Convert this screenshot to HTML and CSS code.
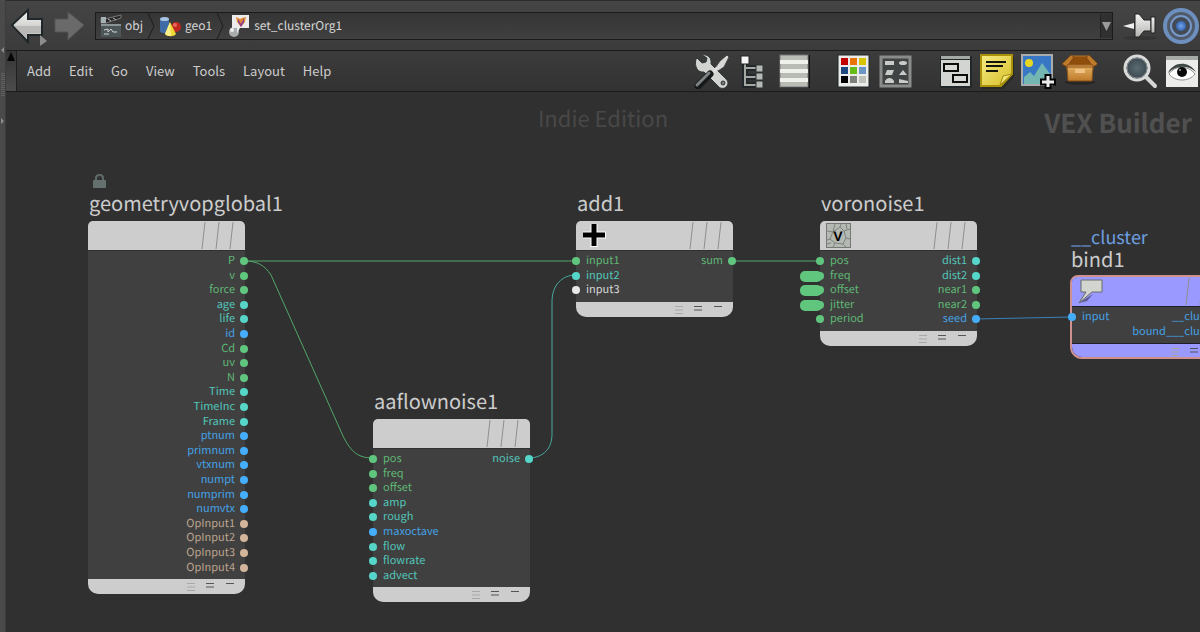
FILE: index.html
```html
<!DOCTYPE html>
<html lang="en">

<head>
    <meta charset="UTF-8">
    <meta name="viewport" content="width=device-width, initial-scale=1.0">
    <title>VEX Builder</title>

    <link rel="stylesheet" href="styles.css">
</head>

<body>
<svg class="defs" aria-hidden="true">
    <defs>
        <linearGradient id="silver" x1="0" y1="0" x2="0" y2="1">
            <stop offset="0" stop-color="#f4f4f2"/>
            <stop offset="1" stop-color="#b4b6b2"/>
        </linearGradient>
        <linearGradient id="gold" x1="0" y1="0" x2="1" y2="1">
            <stop offset="0" stop-color="#f6ec84"/>
            <stop offset="1" stop-color="#d6bf28"/>
        </linearGradient>
        <linearGradient id="wood" x1="0" y1="0" x2="0" y2="1">
            <stop offset="0" stop-color="#e2ac5e"/>
            <stop offset="1" stop-color="#bd7a2c"/>
        </linearGradient>
        <radialGradient id="lens">
            <stop offset="0" stop-color="#5b6c74"/>
            <stop offset="1" stop-color="#38444a"/>
        </radialGradient>
        <radialGradient id="core">
            <stop offset="0" stop-color="#74a4ec"/>
            <stop offset="1" stop-color="#3467b2"/>
        </radialGradient>
        <symbol id="slashes" viewBox="0 0 48 30">
            <path d="M8 1L5 28M22 1L19 28M36 1L33 28" stroke="#8f8f8f" fill="none"/>
        </symbol>
        <symbol id="flags" viewBox="0 0 60 15">
            <path d="M2 4.500h8M2 8h8M2 11.500h8" stroke="#a8a8a8" fill="none"/>
            <path d="M21 4.500h8M21 8h8M41 4.500h8" stroke="#555" fill="none"/>
        </symbol>
    </defs>
</svg>

<div class="app">
    <aside class="splitter">
        <svg width="6" height="130" viewBox="0 0 6 130">
            <path d="M4 47v6L1 50zM1 118v6l3-3z" fill="#8d8d8d"/>
            <path d="M2 73v24M4 73v24" stroke="#777" stroke-dasharray="1 1"/>
        </svg>
    </aside>

    <main class="pane">
        <header class="path-bar">
            <button class="nav-button" aria-label="Back">
                <svg width="42" height="42" viewBox="0 0 42 42">
                    <path d="M6 21L22 6v9h14v16h-14v7z" transform="translate(-1 -1)" fill="url(#silver)" stroke="#20272a" stroke-width="2"/>
                    <path d="M7 21h27v7h-14v6z" fill="#b9bab7"/>
                    <path d="M33 30v11l7-5z" fill="#8c8c8c"/>
                </svg>
            </button>
            <button class="nav-button" aria-label="Forward">
                <svg width="42" height="42" viewBox="0 0 42 42">
                    <path d="M35 20L19 7v7H6v13h13v8z" fill="#6a6a6a" stroke="#545454"/>
                </svg>
            </button>
            <nav class="path-field">
                <a href="#" class="crumb">
                    <svg width="22" height="24" viewBox="0 0 22 24">
                        <path d="M1 4l4 1 16-4v3L6 9H1z" fill="#262626" stroke="#777"/>
                        <path d="M8 5l3 2M13 4l3 2" stroke="#bbb"/>
                        <path d="M1 3h5v6H1z" fill="#a5b0b3"/>
                        <rect x="1" y="10" width="20" height="13" fill="#4c5659"/>
                        <path d="M1 10h20v2H1z" fill="#8b9495"/>
                        <path d="M4 16l4-1v3l3-3 2 3h4M4 20h5" stroke="#d0d0d0" fill="none"/>
                    </svg>
                    obj
                </a>
                <svg class="chevron" width="8" height="26" viewBox="0 0 8 26"><path d="M1 0L7 13 1 26" stroke="#1c1c1c" fill="none"/></svg>
                <a href="#" class="crumb">
                    <svg width="23" height="24" viewBox="0 0 23 24">
                        <path d="M1 5v12c0 3 9 3 9 0V5z" fill="#3f6ba6"/>
                        <ellipse cx="5.500" cy="5" rx="4.500" ry="2" fill="#a8c4e4"/>
                        <circle cx="17" cy="13" r="5" fill="#c0281f"/>
                        <circle cx="16" cy="11" r="2" fill="#e56a5c"/>
                        <path d="M11 8l6 12c-2 3-9 3-11 0z" fill="#f0d936"/>
                        <path d="M11 8l1 14c-3 0-5-1-6-2z" fill="#f8ef8c"/>
                    </svg>
                    geo1
                </a>
                <svg class="chevron" width="8" height="26" viewBox="0 0 8 26"><path d="M1 0L7 13 1 26" stroke="#1c1c1c" fill="none"/></svg>
                <a href="#" class="crumb">
                    <svg width="23" height="24" viewBox="0 0 23 24">
                        <circle cx="6" cy="18" r="5" fill="#a9adad"/>
                        <circle cx="4" cy="16" r="2" fill="#eee"/>
                        <path d="M4 1h17v13h-9l-3 5v-5H4z" fill="#ececec"/>
                        <path d="M8 3l4 2 2-1 4-1-1 5-4 5-4-5z" fill="#e38a35"/>
                        <path d="M10 5l3 5 3-6v4l-3 5-3-5z" fill="#8a3c96"/>
                    </svg>
                    set_clusterOrg1
                </a>
                <button class="path-menu" aria-label="Path history">
                    <svg width="11" height="24" viewBox="0 0 11 24"><path d="M1 8h9l-4.500 9z" fill="#9b9b9b"/></svg>
                </button>
            </nav>
            <button class="nav-button pin" aria-label="Pin">
                <svg width="36" height="36" viewBox="0 0 36 36">
                    <ellipse cx="18" cy="30" rx="17" ry="2" fill="#353535"/>
                    <path d="M1 18l11-3v6z" fill="#f0f0f0"/>
                    <path d="M13 6h4l5 6h7v11h-7l-5 6h-4z" fill="url(#silver)" stroke="#222"/>
                    <rect x="29" y="9" width="4" height="16" fill="url(#silver)" stroke="#222"/>
                </svg>
            </button>
            <button class="nav-button" aria-label="Follow selection">
                <svg width="38" height="38" viewBox="0 0 38 38">
                    <circle cx="19" cy="19" r="16" fill="#515a68" stroke="#6c8fbe" stroke-width="4"/>
                    <circle cx="19" cy="19" r="10" fill="#454b55" stroke="#7599ca" stroke-width="2"/>
                    <circle cx="19" cy="19" r="5" fill="url(#core)"/>
                </svg>
            </button>
        </header>

        <div class="menu-bar">
            <button class="collapse" aria-label="Collapse bar">
                <svg width="10" height="40" viewBox="0 0 10 40"><path d="M1 10L5 1l4 9z" fill="#050505"/></svg>
            </button>
            <nav class="menus">
                <button class="menu">Add</button>
                <button class="menu">Edit</button>
                <button class="menu">Go</button>
                <button class="menu">View</button>
                <button class="menu">Tools</button>
                <button class="menu">Layout</button>
                <button class="menu">Help</button>
            </nav>
            <div class="tools">
                <div class="tool-group">
                    <button class="tool" aria-label="Tools">
                        <svg viewBox="0 0 36 36">
                            <path d="M3 4l5 5 4-1 1-4-5-3c6-1 10 3 9 9l15 15c3 3 2 6 0 8s-6 2-8-1L10 18C4 19 0 13 2 5z" transform="translate(1 1)" fill="#d2d4d1" stroke="#30383a"/>
                            <circle cx="30" cy="30" r="2" fill="#777" stroke="#333"/>
                            <path d="M34 2l2 2-5 10-6 4-3-3 5-7z" fill="#d8d9d6" stroke="#444"/>
                            <path d="M23 14l2 3-7 7-3-3z" fill="#ddd"/>
                            <path d="M5 33L17 21" stroke="#15191a" stroke-width="7" stroke-linecap="round"/>
                            <path d="M4 32L16 20" stroke="#7e8182" stroke-width="3" stroke-linecap="round"/>
                        </svg>
                    </button>
                    <button class="tool" aria-label="Tree view">
                        <svg viewBox="0 0 36 36">
                            <path d="M11 11v21h12M11 15h12M11 24h12" stroke="#22282a" stroke-width="6" fill="none"/>
                            <path d="M11 10v22h12M11 15h12M11 24h12" stroke="#a4aaa3" stroke-width="2" fill="none"/>
                            <rect x="7" y="3" width="8" height="8" fill="#f5f5f5" stroke="#222"/>
                            <path d="M22 12h7v7h-7zM22 20h7v7h-7zM22 28h7v7h-7z" fill="#b4bab3" stroke="#2a3234"/>
                        </svg>
                    </button>
                    <button class="tool" aria-label="List view">
                        <svg viewBox="0 0 36 36">
                            <rect x="5" y="2" width="30" height="33" fill="#111"/>
                            <rect x="5" y="2" width="28" height="32" fill="#b9bcb5" stroke="#777"/>
                            <path d="M5 9h28M5 18h28M5 27h28" stroke="#efefec" stroke-width="4"/>
                        </svg>
                    </button>
                </div>
                <div class="tool-group">
                    <button class="tool" aria-label="Color palette">
                        <svg viewBox="0 0 36 36">
                            <rect x="2" y="2" width="31" height="32" fill="#ececea" stroke="#20282a"/>
                            <path fill="#c00000" d="M5 5h7v7H5z"/><path fill="#e87408" d="M14 5h7v7h-7z"/><path fill="#d9c400" d="M23 5h7v7h-7z"/>
                            <path fill="#1e4680" d="M5 14h7v7H5z"/><path fill="#63bd16" d="M14 14h7v7h-7z"/><path fill="#6b96c4" d="M23 14h7v7h-7z"/>
                            <path fill="#000" d="M5 23h7v7H5z"/><path fill="#7e807c" d="M14 23h7v7h-7z"/><path fill="#bfc1bb" d="M23 23h7v7h-7z"/>
                        </svg>
                    </button>
                    <button class="tool" aria-label="Shape palette">
                        <svg viewBox="0 0 36 36">
                            <rect x="4" y="4" width="29" height="29" fill="#404343" stroke="#8a8c8b" stroke-width="3"/>
                            <path d="M8 8h9v4H8zM10 17h7l-2 5H8zM26 17l4 5h-8zM8 30v-2c2-4 7-4 9 0v2zM22 26l9 2v2h-9z" fill="#c9cbc9"/>
                            <ellipse cx="26" cy="10" rx="4" ry="2" fill="#c9cbc9"/>
                        </svg>
                    </button>
                </div>
                <div class="tool-group">
                    <button class="tool" aria-label="Network box">
                        <svg viewBox="0 0 36 36">
                            <path d="M2 3h32v32H2z" fill="#20282a"/>
                            <path d="M3 7h29v26H3z" fill="#d3d5d2"/>
                            <path d="M3 3h29v3H3z" fill="#a5aaa5"/>
                            <path d="M6 11h14v7H6zM15 22h14v7H15z" fill="#d8dad7" stroke="#0c0c0c" stroke-width="2"/>
                        </svg>
                    </button>
                    <button class="tool" aria-label="Sticky note">
                        <svg viewBox="0 0 36 36">
                            <path d="M3 4h32v20L24 36H3z" fill="#292a22"/>
                            <path d="M2 2h31v19L22 33H2z" fill="url(#gold)" stroke="#ab920c" stroke-width="2"/>
                            <path d="M21 32l3-9 9-2z" fill="#efe474" stroke="#a48d0c"/>
                            <path d="M7 9h20M7 13h17M7 18h12" stroke="#14160c" stroke-width="2"/>
                        </svg>
                    </button>
                    <button class="tool" aria-label="Background image">
                        <svg viewBox="0 0 36 36">
                            <rect x="2" y="2" width="30" height="30" fill="#3777c4" stroke="#a9acad" stroke-width="2"/>
                            <circle cx="9" cy="10" r="4" fill="#e8d722"/>
                            <path d="M4 31v-7l6-5 4 4 8-13 9 12v9z" fill="#74b6b2"/>
                            <path d="M28 21v15M20 29h16" stroke="#050505" stroke-width="7"/>
                            <path d="M28 23v11M22 29h12" stroke="#ececec" stroke-width="3"/>
                        </svg>
                    </button>
                    <button class="tool" aria-label="Asset box">
                        <svg viewBox="0 0 36 36">
                            <ellipse cx="19" cy="29" rx="15" ry="3" fill="#272727"/>
                            <path d="M10 3h18l5 9H5z" fill="#8f4e0c" stroke="#b97724"/>
                            <path d="M10 2l3 2-7 10-5-3zM28 2l-3 2 7 10 5-3z" fill="#bd7a2a" stroke="#7d4511"/>
                            <path d="M6 12h26v5H6z" fill="#dda65b" stroke="#8a5114"/>
                            <path d="M6 14h26l-1 14H7z" fill="url(#wood)" stroke="#8a5114"/>
                            <path d="M14 16h10v4H14z" fill="#efc283"/>
                        </svg>
                    </button>
                </div>
                <div class="tool-group">
                    <button class="tool" aria-label="Find">
                        <svg viewBox="0 0 36 36">
                            <path d="M24 24l9 9" stroke="#d5d7d5" stroke-width="4" stroke-linecap="round"/>
                            <circle cx="15" cy="15" r="12" fill="url(#lens)" stroke="#d9dbd9" stroke-width="3"/>
                            <circle cx="15" cy="15" r="10" fill="none" stroke="#858b8e"/>
                        </svg>
                    </button>
                    <button class="tool" aria-label="Display options">
                        <svg viewBox="0 0 36 36">
                            <path d="M3 3h32v31H3z" fill="#ececea"/>
                            <path d="M3 3h32v4H3z" fill="#a6aaa6"/>
                            <path d="M6 21c6-9 19-9 26 0-6 8-20 8-26 0z" fill="#fff" stroke="#8d928e"/>
                            <path d="M5 20c5-11 20-13 28-1-8-7-20-7-28 1z" fill="#3d4644"/>
                            <circle cx="19" cy="19" r="5" fill="#090909"/>
                            <circle cx="17" cy="17" r="1" fill="#aaa"/>
                        </svg>
                    </button>
                </div>
            </div>
        </div>

        <section class="network">
            <div class="edition">Indie Edition</div>
            <div class="context">VEX Builder</div>

            <svg class="wires">
                <path class="wire-vector" d="M239 169H570M726 169H814M239 169C252 169 259 174 265 183L337 344C345 360 352 366 367 366"/>
                <path class="wire-float" d="M522 366C538 366 546 356 546 342V210C546 193 556 183 570 183"/>
                <path class="wire-int" d="M969 227L1066 225"/>
            </svg>

            <article class="node node-global">
                <svg class="lock" width="13" height="15" viewBox="0 0 13 15">
                    <path d="M3 7V4c0-4 7-4 7 0v3" fill="none" stroke="#5e6a69" stroke-width="2"/>
                    <rect y="6" width="13" height="8" rx="1" fill="#65716f"/>
                </svg>
                <h2 class="node-name">geometryvopglobal1</h2>
                <div class="node-box">
                    <div class="node-head"><svg class="slashes"><use href="#slashes"/></svg></div>
                    <div class="node-body">
                        <ul class="ports inputs"></ul>
                        <ul class="ports outputs">
                            <li class="vector">P</li>
                            <li class="vector">v</li>
                            <li class="vector">force</li>
                            <li class="float">age</li>
                            <li class="float">life</li>
                            <li class="int">id</li>
                            <li class="vector">Cd</li>
                            <li class="vector">uv</li>
                            <li class="vector">N</li>
                            <li class="float">Time</li>
                            <li class="float">TimeInc</li>
                            <li class="float">Frame</li>
                            <li class="int">ptnum</li>
                            <li class="int">primnum</li>
                            <li class="int">vtxnum</li>
                            <li class="int">numpt</li>
                            <li class="int">numprim</li>
                            <li class="int">numvtx</li>
                            <li class="string">OpInput1</li>
                            <li class="string">OpInput2</li>
                            <li class="string">OpInput3</li>
                            <li class="string">OpInput4</li>
                        </ul>
                    </div>
                    <div class="node-foot"><svg class="flags"><use href="#flags"/></svg></div>
                </div>
            </article>

            <article class="node node-noise">
                <h2 class="node-name">aaflownoise1</h2>
                <div class="node-box">
                    <div class="node-head"><svg class="slashes"><use href="#slashes"/></svg></div>
                    <div class="node-body">
                        <ul class="ports inputs">
                            <li class="vector">pos</li>
                            <li class="vector">freq</li>
                            <li class="vector">offset</li>
                            <li class="float">amp</li>
                            <li class="float">rough</li>
                            <li class="int">maxoctave</li>
                            <li class="float">flow</li>
                            <li class="float">flowrate</li>
                            <li class="float">advect</li>
                        </ul>
                        <ul class="ports outputs">
                            <li class="float">noise</li>
                        </ul>
                    </div>
                    <div class="node-foot"><svg class="flags"><use href="#flags"/></svg></div>
                </div>
            </article>

            <article class="node node-add">
                <h2 class="node-name">add1</h2>
                <div class="node-box">
                    <div class="node-head">
                        <svg class="node-icon" viewBox="0 0 25 25"><path d="M12 1v23M1 12h23" stroke="#fff" stroke-width="7"/><path d="M12 1v22M1 12h22" stroke="#000" stroke-width="5"/></svg>
                        <svg class="slashes"><use href="#slashes"/></svg>
                    </div>
                    <div class="node-body">
                        <ul class="ports inputs">
                            <li class="vector">input1</li>
                            <li class="float">input2</li>
                            <li class="any">input3</li>
                        </ul>
                        <ul class="ports outputs">
                            <li class="vector">sum</li>
                        </ul>
                    </div>
                    <div class="node-foot"><svg class="flags"><use href="#flags"/></svg></div>
                </div>
            </article>

            <article class="node node-voronoise">
                <h2 class="node-name">voronoise1</h2>
                <div class="node-box">
                    <div class="node-head">
                        <svg class="node-icon" viewBox="0 0 25 25">
                            <rect x="0.500" y="0.500" width="24" height="24" fill="#b4b9b4" stroke="#777"/>
                            <path d="M1 8l6 1 2-8M7 9l-3 7-3 1M4 16l5 4-2 4M9 20l8 1 3 3M17 21l3-6 4 1M20 15l-2-7 6-2M18 8l-4-4 1-3M14 4L7 9M1 21l4-1M20 1l1 5" stroke="#7e837e" fill="none"/>
                            <text class="glyph" x="12" y="18" text-anchor="middle">V</text>
                        </svg>
                        <svg class="slashes"><use href="#slashes"/></svg>
                    </div>
                    <div class="node-body">
                        <ul class="ports inputs">
                            <li class="vector">pos</li>
                            <li class="vector param">freq</li>
                            <li class="vector param">offset</li>
                            <li class="vector param">jitter</li>
                            <li class="vector">period</li>
                        </ul>
                        <ul class="ports outputs">
                            <li class="float">dist1</li>
                            <li class="float">dist2</li>
                            <li class="vector">near1</li>
                            <li class="vector">near2</li>
                            <li class="int">seed</li>
                        </ul>
                    </div>
                    <div class="node-foot"><svg class="flags"><use href="#flags"/></svg></div>
                </div>
            </article>

            <article class="node node-bind selected">
                <p class="node-note">__cluster</p>
                <h2 class="node-name">bind1</h2>
                <div class="node-box">
                    <div class="node-head">
                        <svg class="node-icon" viewBox="0 0 25 25">
                            <path d="M1 24l8-2 6-7z" fill="#5c5c8c"/>
                            <path d="M3 1h21v12H14L1 24l7-11H3z" fill="#d3d6d0" stroke="#696d68"/>
                        </svg>
                        <svg class="slashes"><use href="#slashes"/></svg>
                    </div>
                    <div class="node-body">
                        <ul class="ports inputs">
                            <li class="int">input</li>
                        </ul>
                        <ul class="ports outputs plain">
                            <li class="int">__cluster</li>
                            <li class="int">bound___cluster</li>
                        </ul>
                    </div>
                    <div class="node-foot"><svg class="flags"><use href="#flags"/></svg></div>
                </div>
            </article>
        </section>
    </main>
</div>
</body>

</html>
```
FILE: styles.css
```css
* {
    box-sizing: border-box;
}

body {
    margin: 0;
    background-color: #303030;
    color: #cccccc;
    font-family: "Noto Sans CJK SC", "Noto Sans", sans-serif;
    font-size: 13px;
    text-rendering: geometricPrecision;
}

button {
    margin: 0;
    padding: 0;
    border: none;
    background: none;
    color: inherit;
    font: inherit;
}

svg {
    display: block;
    flex-shrink: 0;
}

.defs {
    position: absolute;
    width: 0;
    height: 0;
}

.app {
    display: flex;
    min-height: 100vh;
}

.splitter {
    width: 6px;
    background-color: #4a4a4a;
    border-right: 1px solid #3c3c3c;
}

.pane {
    display: flex;
    flex: 1;
    flex-direction: column;
    min-width: 0;
}

/* path bar */
.path-bar {
    display: flex;
    align-items: center;
    height: 51px;
    padding-left: 1px;
    background: linear-gradient(#454545, #3b3b3b);
    border-top: 1px solid #2b2b2b;
    border-bottom: 1px solid #1b1b1b;
}

.path-field {
    display: flex;
    flex: 1;
    align-items: center;
    height: 28px;
    margin: 0 9px 0 4px;
    padding-left: 4px;
    border: 1px solid #1b1b1b;
    background: linear-gradient(#353535, #404040);
}

.pin {
    margin-right: 4px;
}

.crumb {
    display: flex;
    align-items: center;
    gap: 3px;
    margin-right: 4px;
    color: #d6d6d6;
    font-size: 12px;
    line-height: 24px;
    text-decoration: none;
}

.chevron {
    margin-right: 4px;
}

.path-menu {
    margin-left: auto;
    border-left: 1px solid #222;
    background-color: #303030;
}

/* menu bar */
.menu-bar {
    display: flex;
    align-items: center;
    height: 41px;
    background: linear-gradient(#3c3c3c, #323232);
    border-bottom: 1px solid #1b1b1b;
}

.collapse {
    border-right: 1px solid #202020;
    background: linear-gradient(#353535, #4c4c4c);
}

.menus {
    display: flex;
    gap: 18px;
    padding-left: 10px;
}

.menu {
    line-height: 20px;
}

.tools {
    display: flex;
    gap: 25px;
    margin-left: auto;
    padding-right: 1px;
}

.tool-group {
    display: flex;
    gap: 5px;
}

.tool svg {
    width: 36px;
    height: 36px;
}

/* network canvas */
.network {
    position: relative;
    flex: 1;
    overflow: hidden;
    background-color: #303030;
}

.edition {
    padding-top: 11px;
    color: #484848;
    font-size: 22px;
    line-height: 30px;
    text-align: center;
}

.context {
    position: absolute;
    top: 15px;
    right: 8px;
    color: #505050;
    font-size: 26px;
    font-weight: bold;
    line-height: 32px;
}

.wires {
    position: absolute;
    top: 0;
    left: 0;
    width: 100%;
    height: 100%;
    fill: none;
}

.wire-vector {
    stroke: #53a769;
}

.wire-float {
    stroke: #48a99f;
}

.wire-int {
    stroke: #3a83b8;
}

.node {
    position: absolute;
    width: 157px;
}

.node-global {
    top: 82px;
    left: 82px;
}

.node-noise {
    top: 297px;
    left: 367px;
}

.node-add {
    top: 99px;
    left: 570px;
}

.node-voronoise {
    top: 99px;
    left: 814px;
}

.node-bind {
    top: 135px;
    left: 1064px;
}

.lock {
    margin: 0 0 2px 5px;
}

.node-name,
.node-note {
    margin: 0;
    padding-left: 1px;
    font-size: 20px;
    font-weight: normal;
    line-height: 24px;
    white-space: nowrap;
}

.node-name {
    padding-bottom: 6px;
}

.node-note {
    color: #6d9fe0;
    font-size: 18px;
    line-height: 20px;
}

.node-head {
    display: flex;
    height: 29px;
    margin-bottom: 1px;
    padding-left: 6px;
    border-radius: 5px 5px 0 0;
    background-color: #cdcdcd;
}

.node-icon {
    width: 25px;
    height: 25px;
    margin-top: 2px;
}

.glyph {
    font: bold 14px "Liberation Sans", sans-serif;
}

.slashes {
    width: 48px;
    height: 30px;
    margin-left: auto;
}

.node-body {
    display: flex;
    justify-content: space-between;
    padding: 3px 0 4px;
    background-color: #404040;
}

.node-foot {
    height: 15px;
    border-radius: 0 0 10px 10px;
    background-color: #cdcdcd;
}

.flags {
    width: 60px;
    height: 15px;
    margin-left: auto;
}

.ports {
    margin: 0;
    padding: 0 10px;
    list-style: none;
    font-size: 11px;
    line-height: 13px;
}

.ports li {
    position: relative;
    height: 15px;
    white-space: nowrap;
}

.ports li:nth-child(5n + 2),
.ports li:nth-child(5n + 4) {
    height: 14px;
}

.outputs {
    text-align: right;
}

.ports li::before {
    content: "";
    position: absolute;
    top: 3px;
    left: -14px;
    width: 8px;
    height: 8px;
    border-radius: 50%;
    background-color: var(--dot);
}

.ports.outputs li::before {
    right: -13px;
    left: auto;
}

.ports li.param::after {
    content: "";
    position: absolute;
    top: 2px;
    left: -30px;
    width: 22px;
    height: 11px;
    border-radius: 5px;
    background-color: var(--dot);
}

.ports.plain li::before {
    display: none;
}

.vector {
    --dot: #61c67d;
    color: #5fb875;
}

.float {
    --dot: #55d6c8;
    color: #52c6ba;
}

.int {
    --dot: #45aefc;
    color: #44a2e6;
}

.string {
    --dot: #d3b59b;
    color: #bea48e;
}

.any {
    --dot: #e8e8e8;
    color: #d8d8d8;
}

.selected .node-name {
    padding-bottom: 4px;
}

.selected .node-box {
    width: 161px;
    border: 2px solid #cf918f;
    border-radius: 8px 8px 12px 12px;
    background-color: #1f1f2c;
}

.selected .node-head,
.selected .node-foot {
    background-color: #9999ff;
}

.selected .node-foot {
    height: 13px;
    margin-top: 1px;
}
```
